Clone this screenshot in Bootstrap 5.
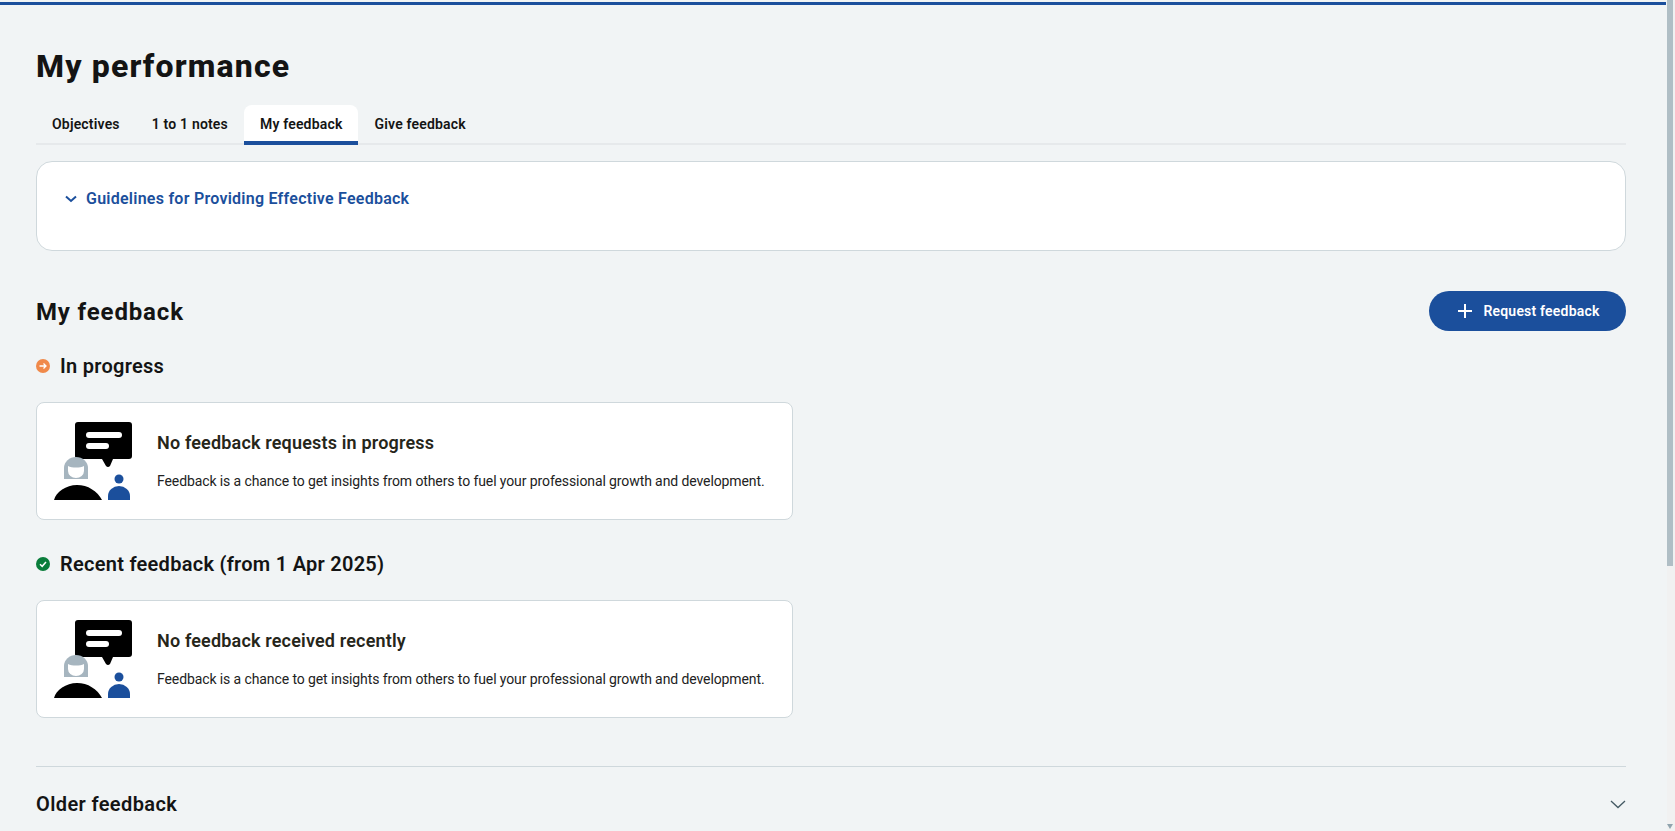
<!doctype html>
<html lang="en"><head><meta charset="utf-8"><title>My performance</title>
<link href="https://cdn.jsdelivr.net/npm/bootstrap@5.3.0/dist/css/bootstrap.min.css" rel="stylesheet">
<style>
body{font-family:"Roboto","Liberation Sans",sans-serif;background:#f1f4f5;color:#141414;min-height:100vh}
.topline{height:3px;background:#1b4f9c;margin:2px 9px 0 0}
.pagewrap{padding:0 49px 0 36px}
.ptitle{font-size:32px;font-weight:800;line-height:40px;margin:41px 0 19px;letter-spacing:1.15px;color:#141414}
.tabrow{border-bottom:2px solid #e6e9eb;height:40px;margin-bottom:16px}
.tabitem{font-size:14px;font-weight:600;letter-spacing:.18px;padding:0 16px;line-height:38px;height:40px;color:#141414;border-radius:8px 8px 0 0;text-decoration:none}
.tabitem.on{background:#fff;border-bottom:4px solid #1b4f9c}
.guide{background:#fff;border:1px solid #cfd8dc;border-radius:16px;height:90px;padding:27px 27px;margin-bottom:40px}
.guide a{font-size:16px;font-weight:600;letter-spacing:.25px;color:#1b4f9c;text-decoration:none;line-height:20px;gap:8px}
.h2x{font-size:24px;font-weight:700;letter-spacing:.85px;line-height:34px;margin:0;padding-top:1px}
.reqbtn{background:#1b4f9c;color:#fff;border:0;border-radius:20px;height:40px;width:197px;padding-left:8px;font-size:14px;font-weight:600;letter-spacing:.2px;gap:10px}
.h3x{font-size:20px;font-weight:600;letter-spacing:.27px;line-height:28px;margin:0}
.headrow{gap:10px;margin-bottom:22px}
.headrow.first{margin-top:21px}
.dot{width:14px;height:14px;flex:none}
.emptycard{background:#fff;border:1px solid #cfd8dc;border-radius:8px;width:757px;height:118px;padding:0 16px}
.emptycard.gapped{margin-bottom:30px}
.emptycard h4{font-size:18px;font-weight:600;letter-spacing:.17px;line-height:24px;margin:0 0 16px;color:#26261a}
.emptycard p{font-size:14px;letter-spacing:-.1px;line-height:20px;margin:0;color:#222}
.divx{border-top:1px solid #cfd8dc;margin-top:48px;padding-top:23px}
.h3y{font-size:20px;font-weight:600;letter-spacing:.38px;margin:0;line-height:28px}
.fakebar{position:fixed;top:0;right:0;bottom:0;width:8px;background:#f1f1f1}
.fakethumb{height:566px;width:6px;background:#b0bec5}
.fakearrow{position:absolute;bottom:2px;left:0;width:0;height:0;border:3px solid transparent;border-top:5px solid #90a4ae;border-bottom:0}
</style></head><body>
<div class="topline"></div>
<main class="pagewrap">
<h1 class="ptitle">My performance</h1>
<nav class="tabrow d-flex">
<a class="tabitem" href="#">Objectives</a><a class="tabitem" href="#">1 to 1 notes</a><a class="tabitem on" href="#">My feedback</a><a class="tabitem" href="#">Give feedback</a>
</nav>
<section class="guide"><a href="#" class="d-flex align-items-center">
<svg width="14" height="14" viewBox="0 0 14 14" fill="none" stroke="#1b4f9c" stroke-width="2"><path d="M2 4.500 7 9l5-4.500"/></svg>Guidelines for Providing Effective Feedback</a></section>
<div class="d-flex justify-content-between align-items-center">
<h2 class="h2x">My feedback</h2>
<button class="reqbtn d-flex align-items-center justify-content-center" type="button"><svg width="16" height="16" viewBox="0 0 16 16" stroke="#fff" stroke-width="2"><path d="M8 1v14M1 8h14"/></svg>Request feedback</button>
</div>
<div class="headrow first d-flex align-items-center">
<svg class="dot" viewBox="0 0 14 14"><circle cx="7" cy="7" r="7" fill="#f0894a"/><path d="M3.500 7h6.500M7.500 4.500 10 7l-2.500 2.500" fill="none" stroke="#fff" stroke-width="1.300"/></svg>
<h3 class="h3x">In progress</h3></div>
<div class="emptycard gapped d-flex align-items-center gap-4">
<svg width="80" height="80" viewBox="0 0 80 80"><use href="#ill"/></svg>
<div><h4>No feedback requests in progress</h4><p>Feedback is a chance to get insights from others to fuel your professional growth and development.</p></div></div>
<div class="headrow d-flex align-items-center">
<svg class="dot" viewBox="0 0 14 14"><circle cx="7" cy="7" r="7" fill="#0a7d3b"/><path d="M4 7.200 6.200 9.300 10 5" fill="none" stroke="#fff" stroke-width="1.500"/></svg>
<h3 class="h3x">Recent feedback (from 1 Apr 2025)</h3></div>
<div class="emptycard d-flex align-items-center gap-4">
<svg width="80" height="80" viewBox="0 0 80 80"><use href="#ill"/></svg>
<div><h4>No feedback received recently</h4><p>Feedback is a chance to get insights from others to fuel your professional growth and development.</p></div></div>
<div class="divx d-flex justify-content-between align-items-center">
<h3 class="h3y">Older feedback</h3>
<svg width="16" height="16" viewBox="0 0 16 16" fill="none" stroke="#455a64" stroke-width="1.300"><path d="M1 5 8 11.500 15 5"/></svg>
</div>
</main>
<div class="fakebar"><div class="fakethumb"></div><div class="fakearrow"></div></div>
<svg width="0" height="0" class="position-absolute"><defs><g id="ill">
<path d="M22 4a3 3 0 0 1 3-3h51a3 3 0 0 1 3 3v31a3 3 0 0 1-3 3H60l-3 7q-2 2-4 0l-4-7H25a3 3 0 0 1-3-3z" fill="#000"/>
<rect x="33" y="11" width="36" height="6" rx="3" fill="#fff"/><rect x="33" y="22" width="23" height="6" rx="3" fill="#fff"/>
<path d="M11 58V47a12 11 0 0 1 24 0v11z" fill="#a6b5bf"/><path d="M15 45c4 2 12 2 16 0v5a8 7 0 0 1-16 0z" fill="#fff"/>
<path d="M1 79c2-8 12-15 23-15 11 0 20 6 25 15z" fill="#000"/>
<circle cx="66" cy="58" r="4.500" fill="#1b4f9c"/><path d="M55 79v-4a11 10 0 0 1 22 0v4z" fill="#1b4f9c"/>
</g></defs></svg>
</body></html>
